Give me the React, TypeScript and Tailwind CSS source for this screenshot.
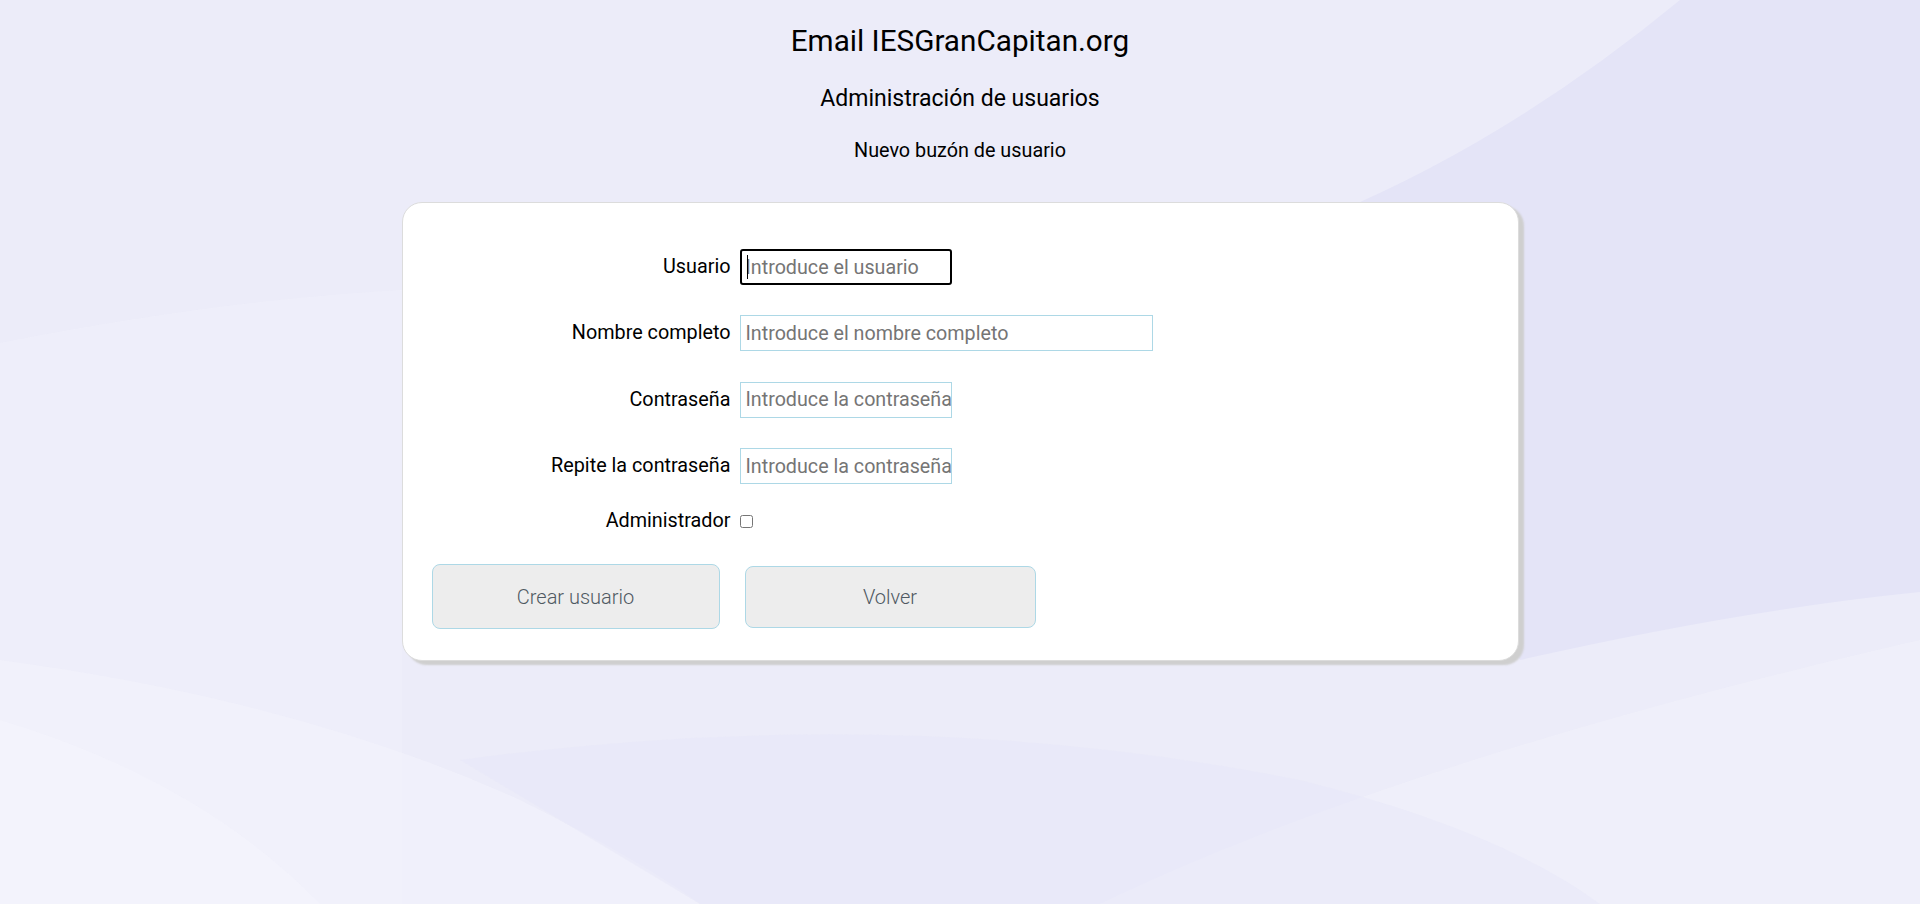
import { useState } from "react";

function Background() {
  return (
    <svg
      className="absolute inset-0 w-full h-full pointer-events-none"
      viewBox="0 0 1920 904"
      preserveAspectRatio="none"
    >
      <rect width="1920" height="904" fill="#ececf9" />
      {/* darker band on the right */}
      <path d="M1680 0 Q1510 140 1330 215 L1520 660 Q1740 610 1920 592 L1920 0 Z" fill="#e4e4f7" />
      {/* left sweep */}
      <path d="M0 343 Q220 300 402 290 L402 904 L0 904 Z" fill="#efeffa" opacity="0.8" />
      {/* bottom waves */}
      <path d="M0 660 Q300 700 520 800 Q640 860 700 904 L0 904 Z" fill="#f1f1fb" opacity="0.9" />
      <path d="M0 720 Q200 780 320 904 L0 904 Z" fill="#f3f3fc" opacity="0.9" />
      <path d="M1100 904 Q1400 760 1920 640 L1920 904 Z" fill="#f0f0fa" opacity="0.9" />
      <path d="M460 760 Q900 700 1300 780 Q1500 830 1600 904 L700 904 Q560 820 460 760 Z" fill="#e8e8f8" opacity="0.6" />
    </svg>
  );
}

function Field({
  label,
  placeholder,
  width,
  focused,
  type = "text",
}: {
  label: string;
  placeholder: string;
  width: string;
  focused?: boolean;
  type?: string;
}) {
  return (
    <div className="flex items-center h-[36px]">
      <label className="w-[328px] text-right text-[19.8px] leading-[24px] text-black">{label}</label>
      <div className="relative ml-[9px]">
        {focused ? (
          <>
            <input
              type={type}
              placeholder={placeholder}
              className={`${width} h-[36px] border-2 border-black rounded-[3px] bg-white pl-[4px] text-[19.7px] text-black placeholder:text-[#757575] outline-none`}
            />
            {/* caret */}
            <span className="absolute left-[7px] top-[6px] w-px h-[24px] bg-black" />
          </>
        ) : (
          <input
            type={type}
            placeholder={placeholder}
            className={`${width} h-[36px] border border-[#add8e6] bg-white pl-[5px] text-[19.7px] text-black placeholder:text-[#757575] outline-none`}
          />
        )}
      </div>
    </div>
  );
}

export default function App() {
  const [admin, setAdmin] = useState(false);

  return (
    <div className="relative min-h-[904px] w-full overflow-hidden" style={{ fontFamily: "Roboto, 'Noto Sans', sans-serif" }}>
      <Background />

      <div className="relative flex flex-col items-center">
        <h1 className="mt-[23px] text-[29.7px] leading-[36px] text-black">Email IESGranCapitan.org</h1>
        <h2 className="mt-[26px] text-[23px] leading-[28px] text-black">Administración de usuarios</h2>
        <h3 className="mt-[26px] text-[19.8px] leading-[24px] text-black">Nuevo buzón de usuario</h3>

        <div className="mt-[39px] w-[1117px] bg-white border border-[#dcdcdc] rounded-[20px] shadow-[5px_4px_2px_#cfcfcf] pt-[46px] pb-[31px]">
          <div className="flex flex-col gap-[30.4px]">
            <Field label="Usuario" placeholder="Introduce el usuario" width="w-[212px]" focused />
            <Field label="Nombre completo" placeholder="Introduce el nombre completo" width="w-[413px]" />
            <Field label="Contraseña" placeholder="Introduce la contraseña" width="w-[212px]" type="password" />
            <Field label="Repite la contraseña" placeholder="Introduce la contraseña" width="w-[212px]" type="password" />
          </div>

          <div className="flex items-center mt-[25px] h-[24px]">
            <label className="w-[328px] text-right text-[19.8px] leading-[24px] text-black">Administrador</label>
            <input
              type="checkbox"
              checked={admin}
              onChange={(e) => setAdmin(e.target.checked)}
              className="ml-[9px] w-[13px] h-[13px]"
            />
          </div>

          <div className="flex items-center mt-[31px] pl-[29px]">
            <button className="w-[288px] h-[65px] bg-[#ededed] border border-[#add8e6] rounded-[8px] flex items-center justify-center text-[20px] font-light text-[#4f5962]">
              Crear usuario
            </button>
            <button className="ml-[25px] w-[291px] h-[62px] bg-[#ededed] border border-[#add8e6] rounded-[8px] flex items-center justify-center text-[20px] font-light text-[#4f5962]">
              Volver
            </button>
          </div>
        </div>
      </div>
    </div>
  );
}
